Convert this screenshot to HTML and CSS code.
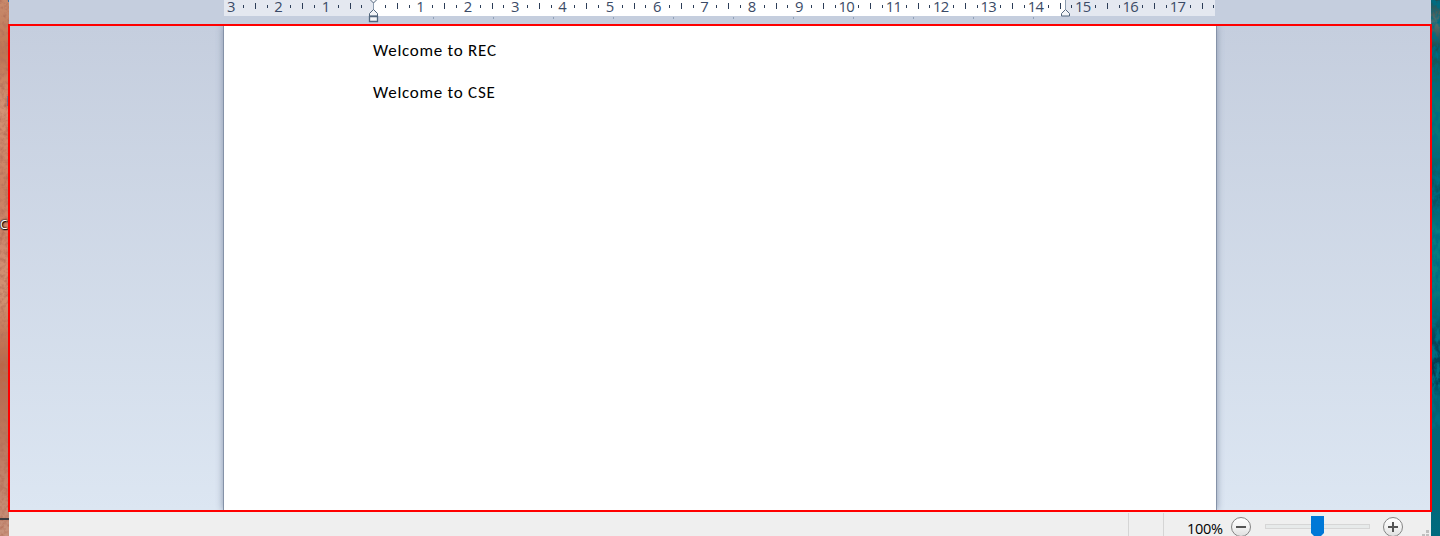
FILE: index.html
```html
<!DOCTYPE html>
<html lang="en">
<head>
<meta charset="utf-8">
<title>Document</title>
<link rel="stylesheet" href="styles.css">
</head>
<body>
<div class="desktop">
  <div class="wallpaper wallpaper-left">
    <svg class="grain" width="9" height="536"><filter id="rock"><feTurbulence type="fractalNoise" baseFrequency=".22" numOctaves="3" seed="4"/><feColorMatrix values="0 0 0 0 .45  0 0 0 0 .16  0 0 0 0 .1  2.2 0 0 0 -.9"/></filter><rect width="9" height="536" filter="url(#rock)"/><path d="M0 519h9" stroke="#3b3b40" stroke-width="2"/><path d="M8 0h1v2h-1zM7.5 96h1v10h-1z" fill="#356da5"/></svg>
    <span class="icon-label">C</span>
  </div>
  <main class="window">
    <svg class="ruler" width="1422" height="24" viewBox="9 0 1422 24">
      <rect x="224" width="991" height="16" fill="#e4e8f0"/>
      <rect x="373" width="692" height="16" fill="#fff"/>
      <g id="marks"></g>
      <g stroke="#53677e" fill="#f3f5f8">
        <path d="M373.5 3v7" fill="none" stroke="#8c9caf"/>
        <path d="M369.5-1l4 4 4-4"/>
        <path d="M369.5 16v-2.500l4-4 4 4V16z"/>
        <path d="M369.500 16.500h8v5h-8z" stroke-width="1.300"/>
        <path d="M1065.500 0v9" fill="none" stroke="#8c9caf"/>
        <path d="M1061.500 16v-2.500l4-4 4 4V16z"/>
      </g>
    </svg>
    <section class="workspace">
      <article class="page">
        <p>Welcome to REC</p>
        <p>Welcome to CSE</p>
      </article>
    </section>
    <footer class="statusbar">
      <i class="divider"></i><i class="divider second"></i>
      <span class="percent">100%</span>
      <svg class="zoom" width="208" height="24" viewBox="1223 512 208 24">
        <defs><linearGradient id="btn" x2="0" y2="1"><stop stop-color="#fff"/><stop offset=".5" stop-color="#f3f3f3"/><stop offset="1" stop-color="#dedede"/></linearGradient></defs>
        <circle cx="1241" cy="527" r="9.500" fill="url(#btn)" stroke="#858585"/>
        <path d="M1236 527h10" stroke="#555" stroke-width="2"/>
        <rect x="1265.500" y="524.500" width="104" height="4" fill="#e7eaea" stroke="#d6d6d6"/>
        <path d="M1311 516h13v17l-4 4h-5l-4-4z" fill="#0078d7"/>
        <circle cx="1393" cy="527" r="9.500" fill="url(#btn)" stroke="#858585"/>
        <path d="M1388 527h10M1393 522v10" stroke="#555" stroke-width="2"/>
        <path d="M1426 530h3v3h-3zM1422 534h3v3h-3zM1426 534h3v3h-3z" fill="#bfbfbf"/>
      </svg>
    </footer>
  </main>
  <div class="wallpaper wallpaper-right">
    <svg class="grain" width="9" height="536"><filter id="sea"><feTurbulence type="fractalNoise" baseFrequency=".2 .12" numOctaves="4" seed="8"/><feColorMatrix values="0 0 0 0 0  0 0 0 0 .15  0 0 0 0 .22  3 0 0 0 -1.1"/></filter><rect width="9" height="390" filter="url(#sea)"/></svg>
  </div>
</div>
<script src="ruler.js"></script>
</body>
</html>
```
FILE: styles.css
```css
body { margin: 0; }
.desktop {
  display: grid;
  grid-template-columns: 9px 1422px 9px;
  width: 1440px;
  height: 536px;
  overflow: hidden;
}
.wallpaper { position: relative; height: 536px; overflow: hidden; }
.wallpaper-left {
  background: linear-gradient(#c98b6c, #bd7554 10%, #d39375 20%, #c98062 35%, #cf8b70 48%, #d09273 55%, #b96749 68%, #bd7b63 85%, #c9947d);
}
.wallpaper-right {
  background: linear-gradient(#30413f, #5e706b 4%, #164e55 9%, #087475 18%, #08767a 25%, #074f60 37%, #067d83 43%, #087c80 54%, #05455a 64%, #03394d 71%, #036174 74%, #006b7e);
}
.grain { display: block; }
.icon-label {
  position: absolute;
  left: 0;
  top: 217px;
  font: 12px/15px "Open Sans", sans-serif;
  color: #fff;
  text-shadow: 0 0 2px #000, 1px 1px 1px #000, 0 0 2px #000;
}
.window {
  display: flex;
  flex-direction: column;
  height: 536px;
  background: #c5cede;
}
.ruler { display: block; flex: none; }
.ruler text {
  font: 14.8px "Open Sans", "Noto Sans", sans-serif;
  letter-spacing: -.7px;
  fill: #3a4a66;
  text-anchor: middle;
}
.workspace {
  display: flex;
  box-sizing: border-box;
  width: 1424px;
  height: 488px;
  margin-left: -1px;
  padding-left: 213px;
  border: 2px solid #f00;
  position: relative;
  z-index: 1;
  background: linear-gradient(#c5cede, #dce6f2);
  overflow: hidden;
}
.page {
  box-sizing: border-box;
  width: 994px;
  height: 484px;
  padding: 13px 0 0 149px;
  border: solid #8592a8;
  border-width: 0 1px;
  background: #fff;
  box-shadow: 0 0 7px #8b98ae;
}
.page p {
  margin: 0 0 18px;
  font: 17px/24px Carlito, Lato, sans-serif;
  letter-spacing: .73px;
  color: #000;
}
.statusbar {
  display: flex;
  height: 24px;
  background: #efefef;
}
.divider {
  width: 1px;
  height: 24px;
  margin-top: 1px;
  margin-left: 1119px;
  background: #d5d5d5;
}
.divider.second { margin-left: 34px; }
.percent {
  width: 36px;
  margin: 7px 0 0 23px;
  font: 14.5px/20px "Open Sans", sans-serif;
  letter-spacing: -.3px;
  color: #000;
  white-space: nowrap;
}
.zoom { flex: none; }
```
FILE: ruler.js
```js
// Builds the centimetre scale and the default tab stops.
const marks = document.getElementById("marks");
const ns = "http://www.w3.org/2000/svg";
const unit = 47.33;
function bar(x, y, height, color) {
  const el = document.createElementNS(ns, "rect");
  el.setAttribute("x", x);
  el.setAttribute("y", y);
  el.setAttribute("width", 1);
  el.setAttribute("height", height);
  el.setAttribute("fill", color);
  marks.append(el);
}
for (let q = -12; q <= 71; q++) {
  const x = 373.3 + q * unit / 4;
  if (q % 4 === 0) {
    if (q === 0) continue;
    const label = document.createElementNS(ns, "text");
    label.setAttribute("x", x - 0.4);
    label.setAttribute("y", 12);
    label.textContent = Math.abs(q / 4);
    marks.append(label);
  } else if (q % 2 === 0) {
    bar(Math.round(x), 3, 6, "#2c3d57");
  } else {
    bar(Math.round(x), 5, 3, "#2c3d57");
  }
}
for (let x = 433; x < 1060; x += 60) bar(x, 17, 2, "#8fa0b8");
```
